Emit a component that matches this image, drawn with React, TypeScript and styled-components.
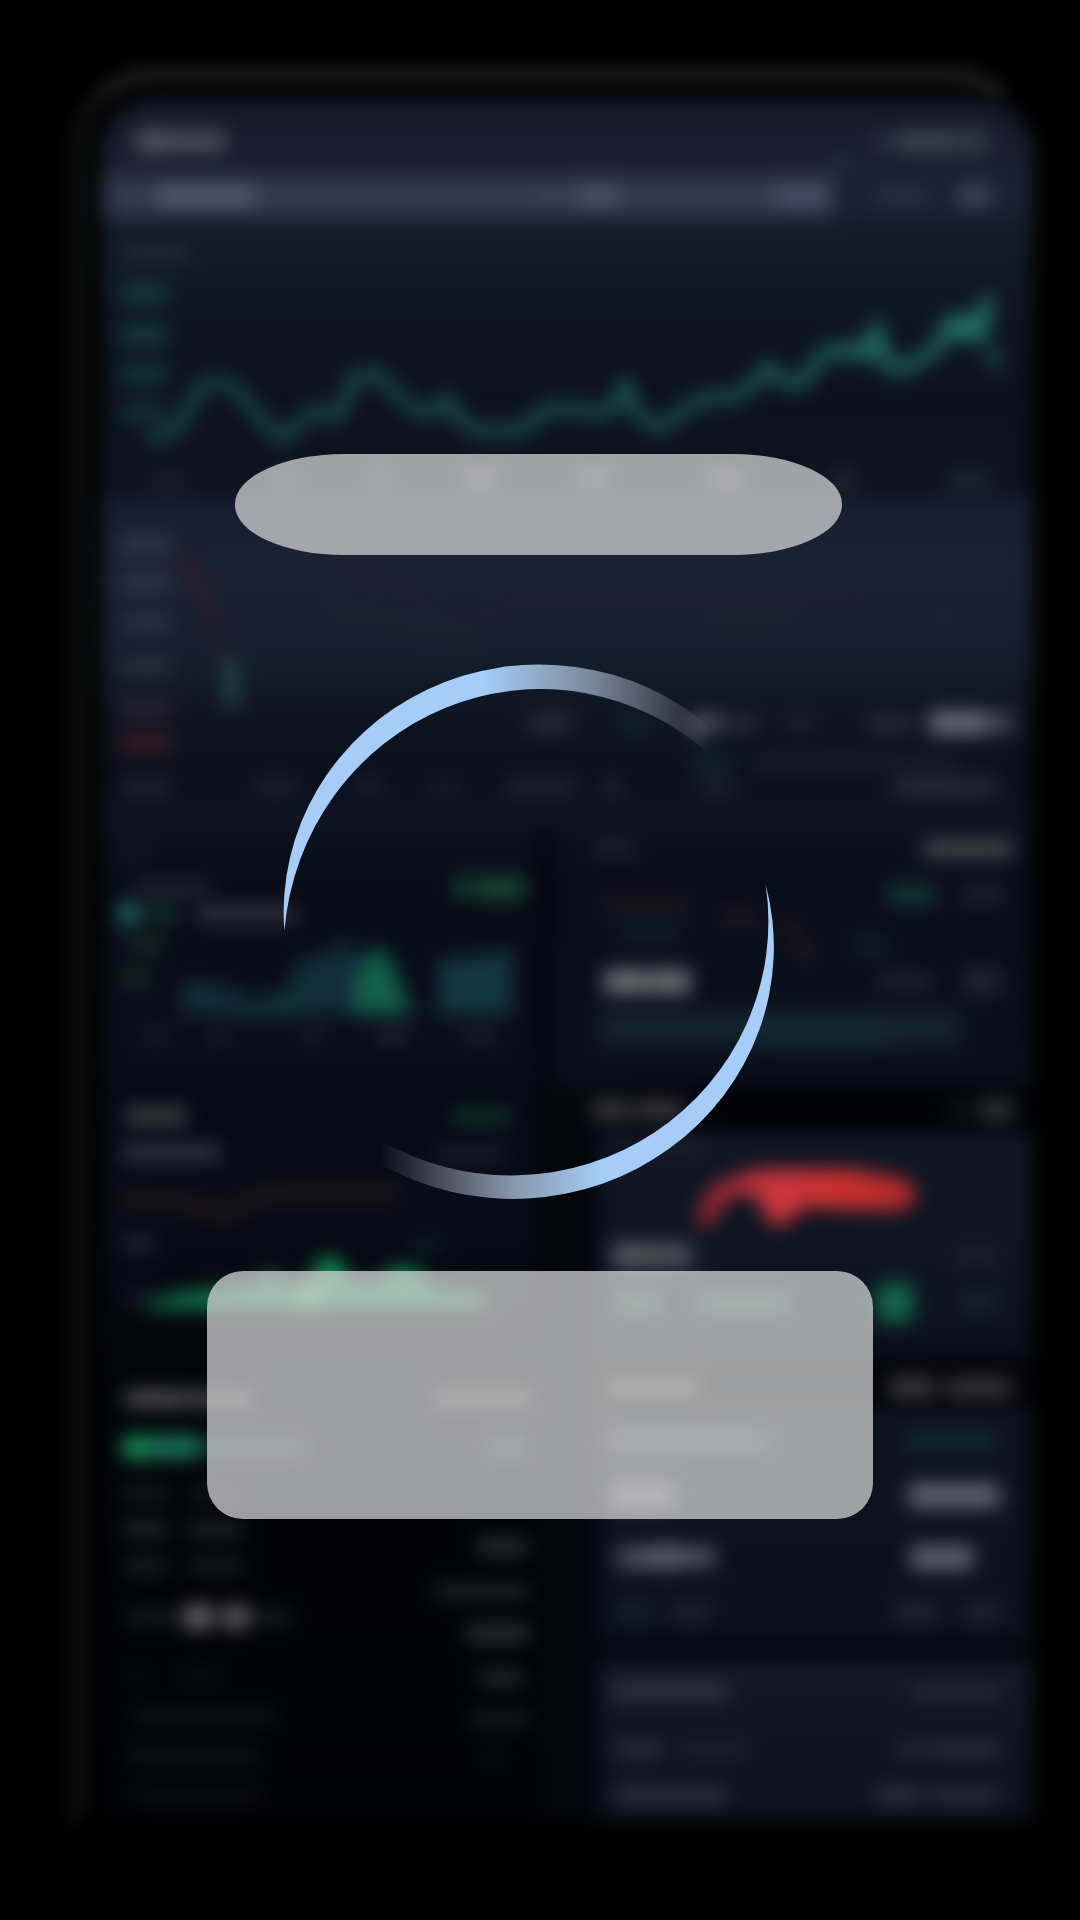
import React from "react";
import styled, { createGlobalStyle } from "styled-components";

const GlobalStyle = createGlobalStyle`
  html, body { margin: 0; background: #000; }
  body { font-family: "Liberation Sans", Arial, sans-serif; }
`;

const Stage = styled.main`
  display: grid;
  width: 1080px;
  height: 1920px;
  overflow: hidden;
  background: #000;
  > * { grid-area: 1 / 1; }
`;

/* ---------- out-of-focus dashboard ---------- */

const Backdrop = styled.div`
  display: grid;
  padding: 66px 46px 92px 70px;
  box-sizing: border-box;
  height: 1920px;
  overflow: hidden;
  > * { grid-area: 1 / 1; }
`;

const Bezel = styled.div`
  border: 18px solid;
  border-color: #1b191a transparent transparent #0d0f0e;
  border-radius: 84px 84px 0 0;
  filter: blur(8px);
`;

const Screen = styled.div`
  display: flex;
  flex-direction: column;
  margin: 32px 0 0 30px;
  width: 933px;
  height: 1721px;
  border-radius: 56px 56px 0 0;
  overflow: hidden;
  background: #03050b;
`;

const Soft = styled.div`
  filter: blur(9.5px);
`;

const Section = styled.section<{ $h: number; $bg: string }>`
  display: grid;
  align-content: start;
  flex: none;
  height: ${(p) => p.$h}px;
  background: ${(p) => p.$bg};
  > * { grid-area: 1 / 1; }
`;

const TabStrip = styled.div`
  display: flex;
  height: 41px;
  margin-left: 6px;
  width: 728px;
  background: #33394e;
`;

const Columns = styled.div`
  display: grid;
  grid-template-columns: 437px 1fr;
  column-gap: 14px;
`;

const Column = styled.div`
  display: flex;
  flex-direction: column;
`;

const Split = styled.div`
  display: grid;
  grid-template-columns: 300px 1fr;
`;

const Card = styled(Section)`
  margin-left: 46px;
`;

const LineList = styled.div`
  display: flex;
  flex-direction: column;
`;

const Line = styled.div<{ $top: number }>`
  display: flex;
  align-items: center;
  height: 24px;
  margin-top: ${(p) => p.$top}px;
`;

const Smudge = styled.span<{ $gap: number; $w: number; $c: string; $h: number }>`
  flex: none;
  margin-left: ${(p) => p.$gap}px;
  width: ${(p) => p.$w}px;
  height: ${(p) => p.$h}px;
  border-radius: 5px;
  background: ${(p) => p.$c};
`;

const Chart = styled.svg`
  display: block;
  overflow: visible;
`;

type Mark = [gap: number, width: number, color: string, height?: number];
type LineData = [top: number, ...marks: Mark[]];

function Lines({ rows }: { rows: LineData[] }) {
  return (
    <LineList>
      {rows.map(([top, ...marks], i) => (
        <Line key={i} $top={top}>
          {marks.map(([gap, w, c, h = 15], j) => (
            <Smudge key={j} $gap={gap} $w={w} $c={c} $h={h} />
          ))}
        </Line>
      ))}
    </LineList>
  );
}

const header: LineData[] = [
  [31, [36, 32, "#535765", 22], [0, 58, "#505462", 18], [645, 18, "#2b3442"], [6, 64, "#454d5a", 16], [-4, 34, "#303d48", 22]],
  [-1, [725, 28, "#242e3d", 12]],
];
const tabs: LineData[] = [
  [8, [56, 98, "#5b6174", 16], [290, 14, "#454c61"], [19, 42, "#4e556b", 18], [156, 52, "#4b5169", 18], [48, 54, "#293142"], [28, 34, "#414859", 20]],
];
const priceScale: LineData[] = [
  [24, [21, 70, "#212d37"]],
  [16, [20, 48, "#153b39", 19]],
  [18, [20, 48, "#153e3a", 19]],
  [15, [20, 48, "#153934", 19]],
  [14, [20, 48, "#143531", 19]],
  [43, [50, 36, "#191f2e"], [88, 24, "#2b2f39"], [71, 22, "#34363f"], [74, 30, "#4a4c52", 19], [86, 28, "#45474e", 18], [100, 34, "#4a4b52", 18], [88, 24, "#282c3a"], [92, 44, "#1f2a36"]],
];
const spreadScale: LineData[] = [
  [34, [20, 52, "#2f3746", 18]],
  [15, [20, 52, "#2d3543", 18]],
  [16, [20, 52, "#2b3341", 17]],
  [19, [20, 52, "#29313d", 17]],
  [17, [20, 52, "#2d242f", 17]],
  [12, [20, 52, "#3b1c22", 18]],
];
const spreadTotals: LineData[] = [
  [213, [428, 44, "#2c313b", 16], [45, 36, "#0c222a", 20], [36, 32, "#4a505b", 21], [4, 32, "#2a303c"], [26, 34, "#211f2a"], [50, 46, "#272e3b"], [16, 58, "#656973", 24], [0, 26, "#464b56", 20]],
  [16, [588, 45, "#0d2227", 20], [18, 210, "#171d2a", 16]],
  [-1, [22, 48, "#1f2631"], [84, 44, "#1d202c"], [56, 30, "#1c1f2b"], [46, 28, "#1a1e2a"], [48, 70, "#23262f"], [26, 20, "#252530"], [78, 34, "#1d252d"], [158, 106, "#2d313b"]],
];
const volumeCard: LineData[] = [
  [6, [18, 28, "#161924"]],
  [16, [36, 75, "#24252e", 14], [242, 28, "#133d2f", 20], [0, 44, "#184b36", 21]],
  [2, [19, 19, "#207668", 22], [5, 36, "#0f2f29", 18], [18, 98, "#35373f", 16]],
  [6, [26, 38, "#122d25"]],
  [8, [20, 32, "#122b23"]],
  [34, [46, 20, "#1b1b26"], [42, 20, "#1f1c25"], [72, 24, "#1b1e2a"], [50, 36, "#1f202a"], [52, 34, "#1b1e2b"]],
];
const fundingCard: LineData[] = [
  [24, [25, 62, "#404348", 16], [263, 62, "#0d2e29", 16]],
  [13, [22, 98, "#343840", 16], [214, 74, "#1a1d26", 15]],
  [66, [22, 34, "#1c2233", 17], [252, 38, "#0c1d20"]],
  [30, [25, 26, "#131922"]],
];
const orders: LineData[] = [
  [24, [25, 60, "#504f55", 17], [0, 68, "#4c4b51", 15]],
  [25, [22, 30, "#198b53", 23], [0, 48, "#1b7860", 22], [0, 108, "#14342f", 17]],
  [22, [20, 50, "#18191f"], [20, 46, "#18191f"]],
  [12, [22, 46, "#24252b"], [18, 58, "#212228"]],
  [13, [24, 44, "#1f2026"], [20, 56, "#1b1c21"]],
  [27, [26, 50, "#191b21"], [7, 30, "#636369", 24], [9, 28, "#5a5a60", 24], [6, 34, "#1c1e24"]],
  [35, [26, 24, "#08090c"], [30, 42, "#0d0e11"]],
  [16, [32, 146, "#111216"]],
  [15, [26, 136, "#111217"]],
  [15, [32, 130, "#0e0f13"]],
];
const orderTotals: LineData[] = [
  [24, [34, 98, "#4a494f", 16]],
  [24, [88, 38, "#17493c", 17]],
  [76, [76, 52, "#303137"]],
  [21, [34, 96, "#212228"]],
  [18, [66, 64, "#313237", 16]],
  [20, [78, 46, "#28292e"]],
  [17, [70, 60, "#1b1c20"]],
  [15, [82, 24, "#0c0d11"]],
];
const depthCard: LineData[] = [
  [6, [42, 40, "#1f232c"], [290, 90, "#4a4b4f", 17]],
  [23, [336, 48, "#123a34", 20], [26, 42, "#1d212d", 18]],
  [62, [53, 42, "#6c6d74", 25], [1, 44, "#696a71", 25], [186, 56, "#20232e"], [30, 38, "#232632", 24]],
];
const caption: LineData[] = [
  [11, [41, 38, "#404044", 17], [4, 52, "#3d3d41", 17], [262, 26, "#17181c"], [6, 34, "#36383c", 19]],
];
const flowCard: LineData[] = [
  [1, [53, 52, "#1a232b", 14]],
  [86, [15, 40, "#54595e", 25], [0, 40, "#4d5257", 25], [262, 44, "#20222d", 16]],
  [24, [16, 48, "#15543f", 20], [36, 92, "#15543f", 20], [88, 36, "#12684a", 38], [46, 40, "#13272a", 18]],
];
const positionCaption: LineData[] = [
  [15, [9, 92, "#4c4c50", 18], [190, 48, "#404044", 18], [10, 66, "#403c46", 17]],
];
const positionCard: LineData[] = [
  [21, [9, 162, "#44464d", 16], [136, 92, "#0f2c30", 17]],
  [30, [15, 62, "#63646b", 24], [234, 92, "#5d636b", 25]],
  [38, [20, 30, "#4d4f59", 23], [0, 38, "#5c5e65", 24], [0, 30, "#53565f", 20], [195, 64, "#5c5f69", 25]],
  [30, [17, 42, "#0e2528"], [16, 38, "#232630"], [184, 44, "#292a34"], [25, 38, "#262933"]],
];
const accountCard: LineData[] = [
  [20, [15, 116, "#2f3544", 18], [182, 92, "#242931"]],
  [33, [18, 48, "#2d313a"], [16, 70, "#1c212c"], [145, 40, "#232730"], [0, 66, "#2d3139"]],
  [22, [18, 112, "#2d3239", 17], [148, 46, "#2d3138", 18], [8, 70, "#2b3038"]],
];

function PriceChart() {
  return (
    <Chart width="934" height="278" viewBox="100 217 934 278">
      <defs>
        <linearGradient id="price" x1="140" x2="1000" y1="0" y2="0" gradientUnits="userSpaceOnUse">
          <stop offset="0" stopColor="#1c5447" />
          <stop offset=".6" stopColor="#1f5f53" />
          <stop offset=".8" stopColor="#22705f" />
          <stop offset="1" stopColor="#25806c" />
        </linearGradient>
      </defs>
      <path
        d="M147 438L165 436L182 422L193 400L200 386L216 382L234 387L250 405L266 426L282 438L300 424L316 410L338 417L347 400L352 378L378 374L396 394L418 412L436 412L447 398L460 420L478 431L514 431L532 423L545 409L570 408L600 414L616 406L625 382L636 411L650 425L665 426L690 405L712 397L735 397L756 382L768 366L780 381L801 384L818 360L830 350L868 348L877 326L883 350L892 370L910 366L938 348L946 326L960 318L965 332L978 326L988 300L982 336L950 334"
        fill="none"
        stroke="url(#price)"
        strokeWidth="10"
        strokeLinejoin="round"
      />
      <path d="M826 348L868 340L882 342L886 362L826 358Z" fill="#1f6556" />
      <path d="M944 320L986 312V338L944 338Z" fill="#217260" />
      <path d="M991 348L996 368" stroke="#1c564d" strokeWidth="12" />
    </Chart>
  );
}

function SpreadChart() {
  return (
    <Chart width="934" height="335" viewBox="100 495 934 335" fill="none">
      <path d="M182 545L192 575L206 602L218 640L225 668" stroke="#2a1b28" strokeWidth="8" />
      <path d="M188 562L206 602L214 615" stroke="#3d1d28" strokeWidth="8" />
      <path d="M231 655V704" stroke="#234345" strokeWidth="16" />
      <path d="M300 535L350 550L372 580L410 597L460 620L520 600L640 598L760 602L860 595" stroke="#221f30" strokeWidth="10" />
      <path d="M320 605L480 640M700 620L800 618M930 610L960 625" stroke="#152630" strokeWidth="18" />
    </Chart>
  );
}

function VolumeChart() {
  return (
    <Chart width="437" height="250" viewBox="100 830 437 250">
      <path d="M182 1014V984L205 980L220 990L228 984L240 996L258 1004L285 992L298 962L328 952L340 940L356 952L372 962V1014Z" fill="#122e39" />
      <path d="M240 1016V1003L275 996L300 1000V1016Z" fill="#133736" />
      <path d="M354 1014V980L372 950L386 950L400 982L412 1014Z" fill="#12604a" />
      <path d="M438 1014V960L498 954L512 946V1014Z" fill="#133740" />
    </Chart>
  );
}

function FundingChart() {
  return (
    <Chart width="437" height="282" viewBox="100 1080 437 282">
      <path d="M122 1198L200 1205L225 1216L260 1195L400 1194" stroke="#20151c" strokeWidth="14" fill="none" />
      <path d="M146 1308V1302L180 1294L240 1287L262 1284L268 1266L276 1284L310 1284L318 1258L340 1258L350 1283L380 1282L390 1268L416 1268L430 1288L486 1294V1308Z" fill="#128552" />
      <path d="M294 1305V1290L322 1284V1305Z" fill="#5cc468" />
    </Chart>
  );
}

function DepthChart() {
  return (
    <Chart width="483" height="260" viewBox="551 830 483 260" fill="none">
      <path d="M600 905H690M720 918L760 916M785 920L812 960" stroke="#21161e" strokeWidth="14" />
      <path d="M618 930H680M850 945H890" stroke="#0e1d28" strokeWidth="18" />
      <path d="M600 1028H960" stroke="#13232e" strokeWidth="34" />
      <path d="M758 1038H890" stroke="#12302c" strokeWidth="18" />
    </Chart>
  );
}

function FlowChart() {
  return (
    <Chart width="437" height="230" viewBox="597 1132 437 230">
      <defs>
        <linearGradient id="flow" x1="694" x2="918" y1="0" y2="0" gradientUnits="userSpaceOnUse">
          <stop offset="0" stopColor="#96272f" />
          <stop offset=".35" stopColor="#c9353e" />
          <stop offset=".65" stopColor="#cb302e" />
          <stop offset="1" stopColor="#ae292c" />
        </linearGradient>
      </defs>
      <path
        d="M696 1226L704 1196L724 1180L760 1169L850 1169L902 1178L916 1188L913 1203L900 1211L840 1209L804 1207L785 1225L768 1223L758 1198L738 1194L722 1204L710 1226Z"
        fill="url(#flow)"
      />
    </Chart>
  );
}

function BlurredDashboard() {
  return (
    <Backdrop aria-hidden="true">
      <Bezel />
      <Soft>
        <Screen>
          <Section $h={78} $bg="linear-gradient(#151929, #1a2130)">
            <Lines rows={header} />
          </Section>
          <Section $h={41} $bg="#1a2232">
            <TabStrip />
            <Lines rows={tabs} />
          </Section>
          <Section $h={281} $bg="linear-gradient(#121d29, #0f1623 30%, #0c111c 65%, #0e1322)">
            <PriceChart />
            <Lines rows={priceScale} />
          </Section>
          <Section $h={332} $bg="linear-gradient(#161e2f, #1a2233 22%, #161f2e 44%, #0e1420 66%, #0b0f1a 84%, #101424)">
            <SpreadChart />
            <Lines rows={spreadScale} />
            <Lines rows={spreadTotals} />
          </Section>
          <Columns>
            <Column>
              <Section $h={250} $bg="linear-gradient(#0c101c, #080c15 30%, #0b0e19 80%, #0a0d18)">
                <VolumeChart />
                <Lines rows={volumeCard} />
              </Section>
              <Section $h={282} $bg="linear-gradient(#060a12, #090c16 45%, #03050c)">
                <FundingChart />
                <Lines rows={fundingCard} />
              </Section>
              <Section $h={460} $bg="linear-gradient(#03050c, #020308 40%, #010206)">
                <Split>
                  <Lines rows={orders} />
                  <Lines rows={orderTotals} />
                </Split>
              </Section>
            </Column>
            <Column>
              <Section $h={256} $bg="linear-gradient(#0c101d, #0a0e18 20%, #0b0f1a)">
                <DepthChart />
                <Lines rows={depthCard} />
              </Section>
              <Section $h={46} $bg="linear-gradient(90deg, #06080f, #010207 40%)">
                <Lines rows={caption} />
              </Section>
              <Card $h={228} $bg="linear-gradient(#101624, #0e1421 70%, #0a0e19)">
                <FlowChart />
                <Lines rows={flowCard} />
              </Card>
              <Card $h={48} $bg="#030408">
                <Lines rows={positionCaption} />
              </Card>
              <Card $h={234} $bg="linear-gradient(#0e1320, #0c101b)">
                <Lines rows={positionCard} />
              </Card>
              <Card $h={18} $bg="#03050a" />
              <Card $h={164} $bg="linear-gradient(#141829, #10141f 50%, #0e121e)">
                <Lines rows={accountCard} />
              </Card>
            </Column>
          </Columns>
        </Screen>
      </Soft>
    </Backdrop>
  );
}

/* ---------- sharp foreground ---------- */

const Foreground = styled.div`
  display: flex;
  flex-direction: column;
  align-items: flex-start;
  padding-top: 454px;
  z-index: 1;
`;

const Pill = styled.div`
  width: 607px;
  height: 101px;
  margin-left: 235px;
  border-radius: 109px / 50px;
  background: rgba(217, 217, 217, 0.72);
`;

const Spinner = styled.svg`
  display: block;
  width: 520px;
  height: 555px;
  margin: 100px 0 61px 270px;
`;

const MessageCard = styled.div`
  width: 666px;
  height: 248px;
  margin-left: 207px;
  border-radius: 36px;
  background: rgba(217, 217, 217, 0.72);
`;

export default function App() {
  return (
    <>
      <GlobalStyle />
      <Stage>
        <BlurredDashboard />
        <Foreground>
          <Pill />
          <Spinner viewBox="270 655 520 555">
            <defs>
              <linearGradient id="arcTop" gradientUnits="userSpaceOnUse" x1="484" x2="712" y1="0" y2="0">
                <stop offset="0" stopColor="#a5cdf8" />
                <stop offset=".49" stopColor="#bdd3e9" stopOpacity=".58" />
                <stop offset="1" stopColor="#d9d9d9" stopOpacity="0" />
              </linearGradient>
              <linearGradient id="arcBottom" gradientUnits="userSpaceOnUse" x1="602" x2="380" y1="0" y2="0">
                <stop offset="0" stopColor="#a5cdf8" />
                <stop offset=".41" stopColor="#bad2ec" stopOpacity=".7" />
                <stop offset="1" stopColor="#d9d9d9" stopOpacity="0" />
              </linearGradient>
            </defs>
            <path d="M284.4 931A256 248 0 0 1 712 729V756.5A257 264 0 0 0 284.4 931Z" fill="url(#arcTop)" />
            <path d="M765.6 884A261 252 0 0 1 380 1163.8V1140.2A257.5 254 0 0 0 765.6 884Z" fill="url(#arcBottom)" />
          </Spinner>
          <MessageCard />
        </Foreground>
      </Stage>
    </>
  );
}
